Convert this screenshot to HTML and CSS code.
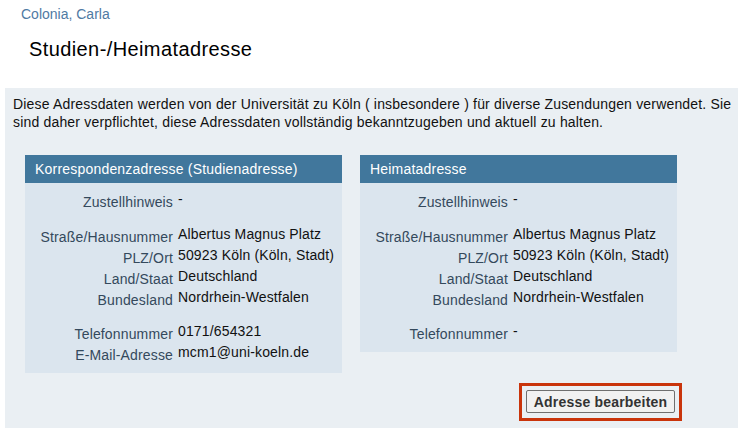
FILE: index.html
```html
<!DOCTYPE html>
<html lang="de">
<head>
<meta charset="utf-8">
<link rel="stylesheet" href="styles.css">
</head>
<body>
<div class="user">Colonia, Carla</div>
<h1 class="title">Studien-/Heimatadresse</h1>
<div class="panel">
  <p class="intro">Diese Adressdaten werden von der Universität zu Köln ( insbesondere ) für diverse Zusendungen verwendet. Sie sind daher verpflichtet, diese Adressdaten vollständig bekanntzugeben und aktuell zu halten.</p>
  <div class="boxes">
    <div class="box">
      <div class="box-head">Korrespondenzadresse (Studienadresse)</div>
      <div class="box-body">
        <div class="group">
          <div class="row"><span class="lbl">Zustellhinweis</span><span class="val">-</span></div>
        </div>
        <div class="group">
          <div class="row"><span class="lbl">Straße/Hausnummer</span><span class="val">Albertus Magnus Platz</span></div>
          <div class="row"><span class="lbl">PLZ/Ort</span><span class="val">50923 Köln (Köln, Stadt)</span></div>
          <div class="row"><span class="lbl">Land/Staat</span><span class="val">Deutschland</span></div>
          <div class="row"><span class="lbl">Bundesland</span><span class="val">Nordrhein-Westfalen</span></div>
        </div>
        <div class="group">
          <div class="row"><span class="lbl">Telefonnummer</span><span class="val">0171/654321</span></div>
          <div class="row"><span class="lbl">E-Mail-Adresse</span><span class="val">mcm1@uni-koeln.de</span></div>
        </div>
      </div>
    </div>
    <div class="box">
      <div class="box-head">Heimatadresse</div>
      <div class="box-body">
        <div class="group">
          <div class="row"><span class="lbl">Zustellhinweis</span><span class="val">-</span></div>
        </div>
        <div class="group">
          <div class="row"><span class="lbl">Straße/Hausnummer</span><span class="val">Albertus Magnus Platz</span></div>
          <div class="row"><span class="lbl">PLZ/Ort</span><span class="val">50923 Köln (Köln, Stadt)</span></div>
          <div class="row"><span class="lbl">Land/Staat</span><span class="val">Deutschland</span></div>
          <div class="row"><span class="lbl">Bundesland</span><span class="val">Nordrhein-Westfalen</span></div>
        </div>
        <div class="group">
          <div class="row"><span class="lbl">Telefonnummer</span><span class="val">-</span></div>
        </div>
      </div>
    </div>
  </div>
  <div class="actions">
    <div class="highlight"><button class="btn" type="button">Adresse bearbeiten</button></div>
  </div>
</div>
</body>
</html>
```
FILE: styles.css
```css
html, body {
  margin: 0;
  padding: 0;
  background: #ffffff;
}
body {
  font-family: "Liberation Sans", Arial, sans-serif;
  font-size: 14px;
  color: #111;
  width: 746px;
  height: 437px;
  overflow: hidden;
}
.user {
  margin: 6px 0 0 21px;
  font-size: 14px;
  line-height: 16px;
  color: #4f7aa3;
}
.title {
  margin: 15px 0 0 29px;
  font-size: 20px;
  font-weight: normal;
  line-height: 24px;
  letter-spacing: 0.4px;
  color: #000;
}
.panel {
  margin: 27px 0 0 5px;
  width: 733px;
  height: 340px;
  box-sizing: border-box;
  background: #eaeff3;
  padding: 7px 0 0 8px;
  letter-spacing: 0.3px;
}
.intro {
  margin: 0;
  line-height: 18px;
  letter-spacing: 0.18px;
  color: #111;
}
.boxes {
  display: flex;
  gap: 18px;
  margin: 24px 0 0 12px;
  align-items: flex-start;
}
.box {
  width: 317px;
  background: #dbe5ee;
}
.box-head {
  height: 28px;
  line-height: 28px;
  background: #41779c;
  color: #fff;
  padding-left: 10px;
  font-size: 14px;
  letter-spacing: 0.2px;
}
.box-body {
  padding: 7px 0 9px;
}
.group + .group {
  margin-top: 14px;
}
.group:last-child {
  margin-top: 13px;
}
.row {
  display: grid;
  grid-template-columns: 148px 1fr;
  column-gap: 5px;
  line-height: 18px;
}
.lbl {
  text-align: right;
  padding-top: 3px;
  letter-spacing: 0.15px;
  color: #34495c;
}
.val {
  padding-bottom: 3px;
  letter-spacing: 0.15px;
  color: #111;
}
.actions {
  display: flex;
  justify-content: flex-end;
  margin-top: 10px;
  padding-right: 56px;
}
.highlight {
  border: 3px solid #c9340b;
  padding: 4px 4px 5px 4px;
}
.btn {
  display: block;
  width: 149px;
  height: 23px;
  margin: 0;
  padding: 0;
  border: 1px solid #6f6f6f;
  border-radius: 2px;
  background: #f1f1f1;
  font-family: "Liberation Sans", Arial, sans-serif;
  font-size: 14px;
  font-weight: bold;
  letter-spacing: 0.2px;
  color: #333;
  cursor: pointer;
}
```
